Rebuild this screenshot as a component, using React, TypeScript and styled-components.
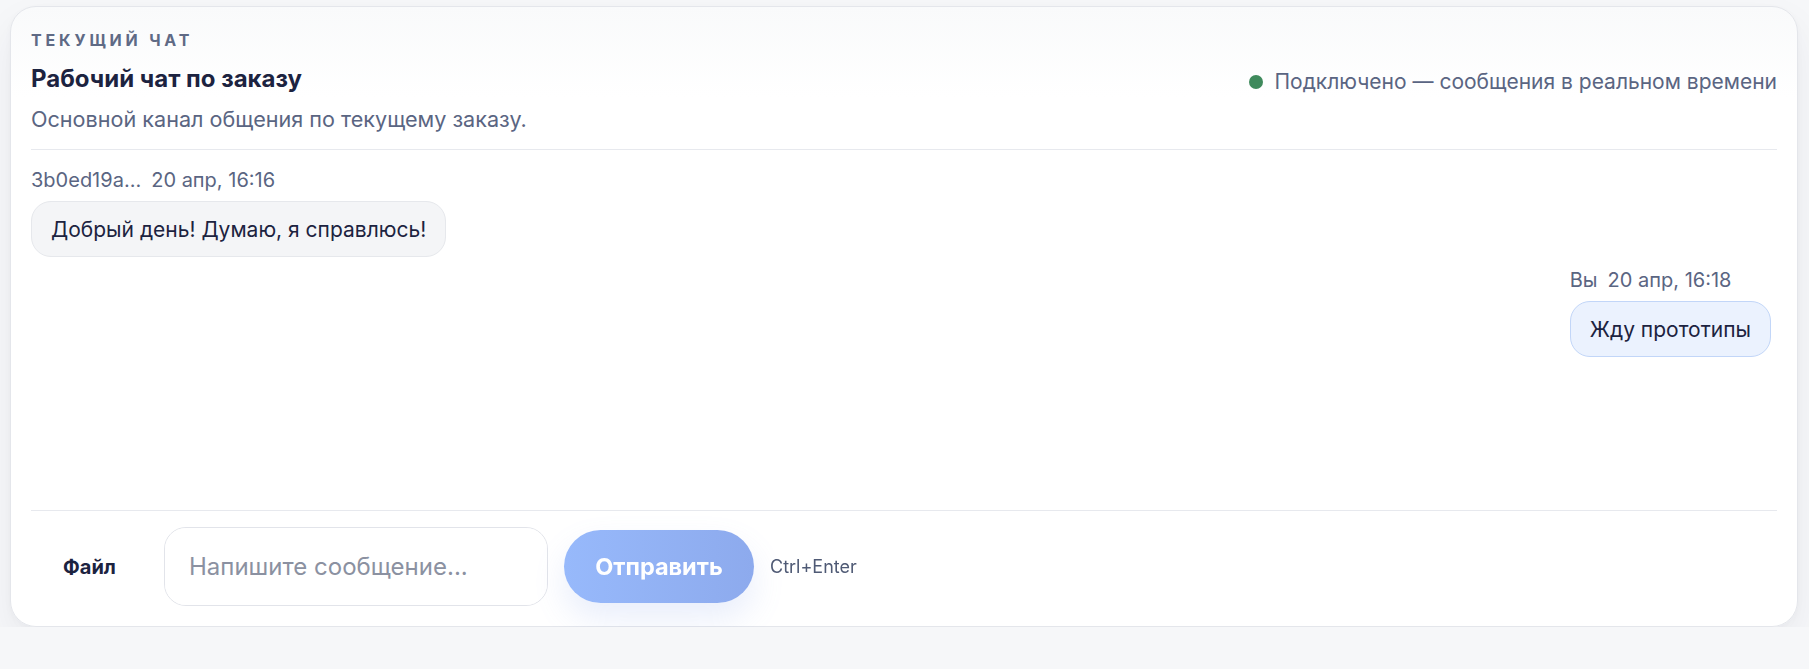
import React from "react";
import styled, { createGlobalStyle } from "styled-components";

const GlobalStyle = createGlobalStyle`
  html, body {
    margin: 0;
    padding: 0;
    background: #f6f7f9;
    font-family: Inter, "Noto Sans", sans-serif;
  }
`;

interface Message {
  id: string;
  author: string;
  time: string;
  text: string;
  mine: boolean;
}

const messages: Message[] = [
  {
    id: "1",
    author: "3b0ed19a...",
    time: "20 апр, 16:16",
    text: "Добрый день! Думаю, я справлюсь!",
    mine: false,
  },
  {
    id: "2",
    author: "Вы",
    time: "20 апр, 16:18",
    text: "Жду прототипы",
    mine: true,
  },
];

const Page = styled.div`
  padding: 6px 11px 0 10px;
`;

const Card = styled.section`
  box-sizing: border-box;
  height: 621px;
  display: flex;
  flex-direction: column;
  padding: 22px 20px 20px 20px;
  background: linear-gradient(180deg, #f9fafb 0px, #ffffff 90px);
  border: 1px solid #e4e6eb;
  border-radius: 26px;
  box-shadow: 0 18px 40px rgba(30, 41, 70, 0.06), 0 2px 6px rgba(30, 41, 70, 0.03);
`;

const Header = styled.header`
  display: flex;
  justify-content: space-between;
  align-items: flex-start;
  padding-bottom: 16px;
  border-bottom: 1px solid #e7e9ee;
`;

const TitleBlock = styled.div`
  display: flex;
  flex-direction: column;
`;

const Eyebrow = styled.div`
  font-size: 16px;
  line-height: 22px;
  font-weight: 700;
  letter-spacing: 0.24em;
  text-transform: uppercase;
  color: #5f6a85;
`;

const Title = styled.h2`
  margin: 13px 0 0;
  font-size: 24px;
  line-height: 30px;
  font-weight: 700;
  color: #1c2340;
`;

const Subtitle = styled.p`
  margin: 11px 0 0;
  font-size: 21.6px;
  line-height: 28px;
  color: #5a6582;
`;

const Status = styled.div`
  display: flex;
  align-items: center;
  gap: 11px;
  margin-top: 39px;
  font-size: 21px;
  line-height: 28px;
  color: #5a6582;
`;

const Dot = styled.span`
  width: 14px;
  height: 14px;
  border-radius: 50%;
  background: #3f8a5c;
`;

const MessageList = styled.div`
  flex: 1;
  display: flex;
  flex-direction: column;
  gap: 11px;
  padding: 18px 6px 12px 0;
  border-bottom: 1px solid #e7e9ee;
`;

const MessageGroup = styled.div<{ $mine: boolean }>`
  display: flex;
  flex-direction: column;
  align-items: flex-start;
  align-self: ${(p) => (p.$mine ? "flex-end" : "flex-start")};
`;

const Meta = styled.div`
  display: flex;
  gap: 10px;
  font-size: 20px;
  line-height: 24px;
  color: #5a6582;
  margin-bottom: 9px;
`;

const Bubble = styled.div<{ $mine: boolean }>`
  box-sizing: border-box;
  height: 56px;
  display: flex;
  align-items: center;
  padding: 0 19px;
  border-radius: 20px;
  font-size: 21px;
  color: #1c2340;
  background: ${(p) => (p.$mine ? "#ebf2fe" : "#f4f5f7")};
  border: 1px solid ${(p) => (p.$mine ? "#c2d6f8" : "#e6e8ec")};
`;

const Composer = styled.div`
  display: flex;
  align-items: center;
  gap: 16px;
  padding-top: 16px;
`;

const FileButton = styled.button`
  width: 117px;
  height: 60px;
  padding: 0;
  border: none;
  background: transparent;
  font-family: inherit;
  font-size: 20px;
  font-weight: 700;
  color: #1c2340;
  cursor: pointer;
`;

const Input = styled.textarea`
  box-sizing: border-box;
  width: 384px;
  height: 79px;
  padding: 23px 24px;
  resize: none;
  border: 1px solid #e2e4ea;
  border-radius: 22px;
  font-family: inherit;
  font-size: 24px;
  line-height: 32px;
  color: #1c2340;
  outline: none;
  &::placeholder {
    color: #8b91a1;
  }
`;

const SendButton = styled.button`
  width: 190px;
  height: 73px;
  border: none;
  border-radius: 999px;
  background: linear-gradient(90deg, #97b9fb, #8daaed);
  box-shadow: 0 16px 32px rgba(120, 150, 230, 0.16);
  color: #ffffff;
  font-family: inherit;
  font-size: 23.5px;
  font-weight: 700;
  cursor: pointer;
`;

const Hint = styled.span`
  font-size: 18px;
  color: #4f5a75;
`;

export default function App() {
  return (
    <Page>
      <GlobalStyle />
      <Card>
        <Header>
          <TitleBlock>
            <Eyebrow>Текущий чат</Eyebrow>
            <Title>Рабочий чат по заказу</Title>
            <Subtitle>Основной канал общения по текущему заказу.</Subtitle>
          </TitleBlock>
          <Status>
            <Dot />
            Подключено — сообщения в реальном времени
          </Status>
        </Header>
        <MessageList>
          {messages.map((m) => (
            <MessageGroup key={m.id} $mine={m.mine}>
              <Meta>
                <span>{m.author}</span>
                <span>{m.time}</span>
              </Meta>
              <Bubble $mine={m.mine}>{m.text}</Bubble>
            </MessageGroup>
          ))}
        </MessageList>
        <Composer>
          <FileButton>Файл</FileButton>
          <Input placeholder="Напишите сообщение..." />
          <SendButton>Отправить</SendButton>
          <Hint>Ctrl+Enter</Hint>
        </Composer>
      </Card>
    </Page>
  );
}
